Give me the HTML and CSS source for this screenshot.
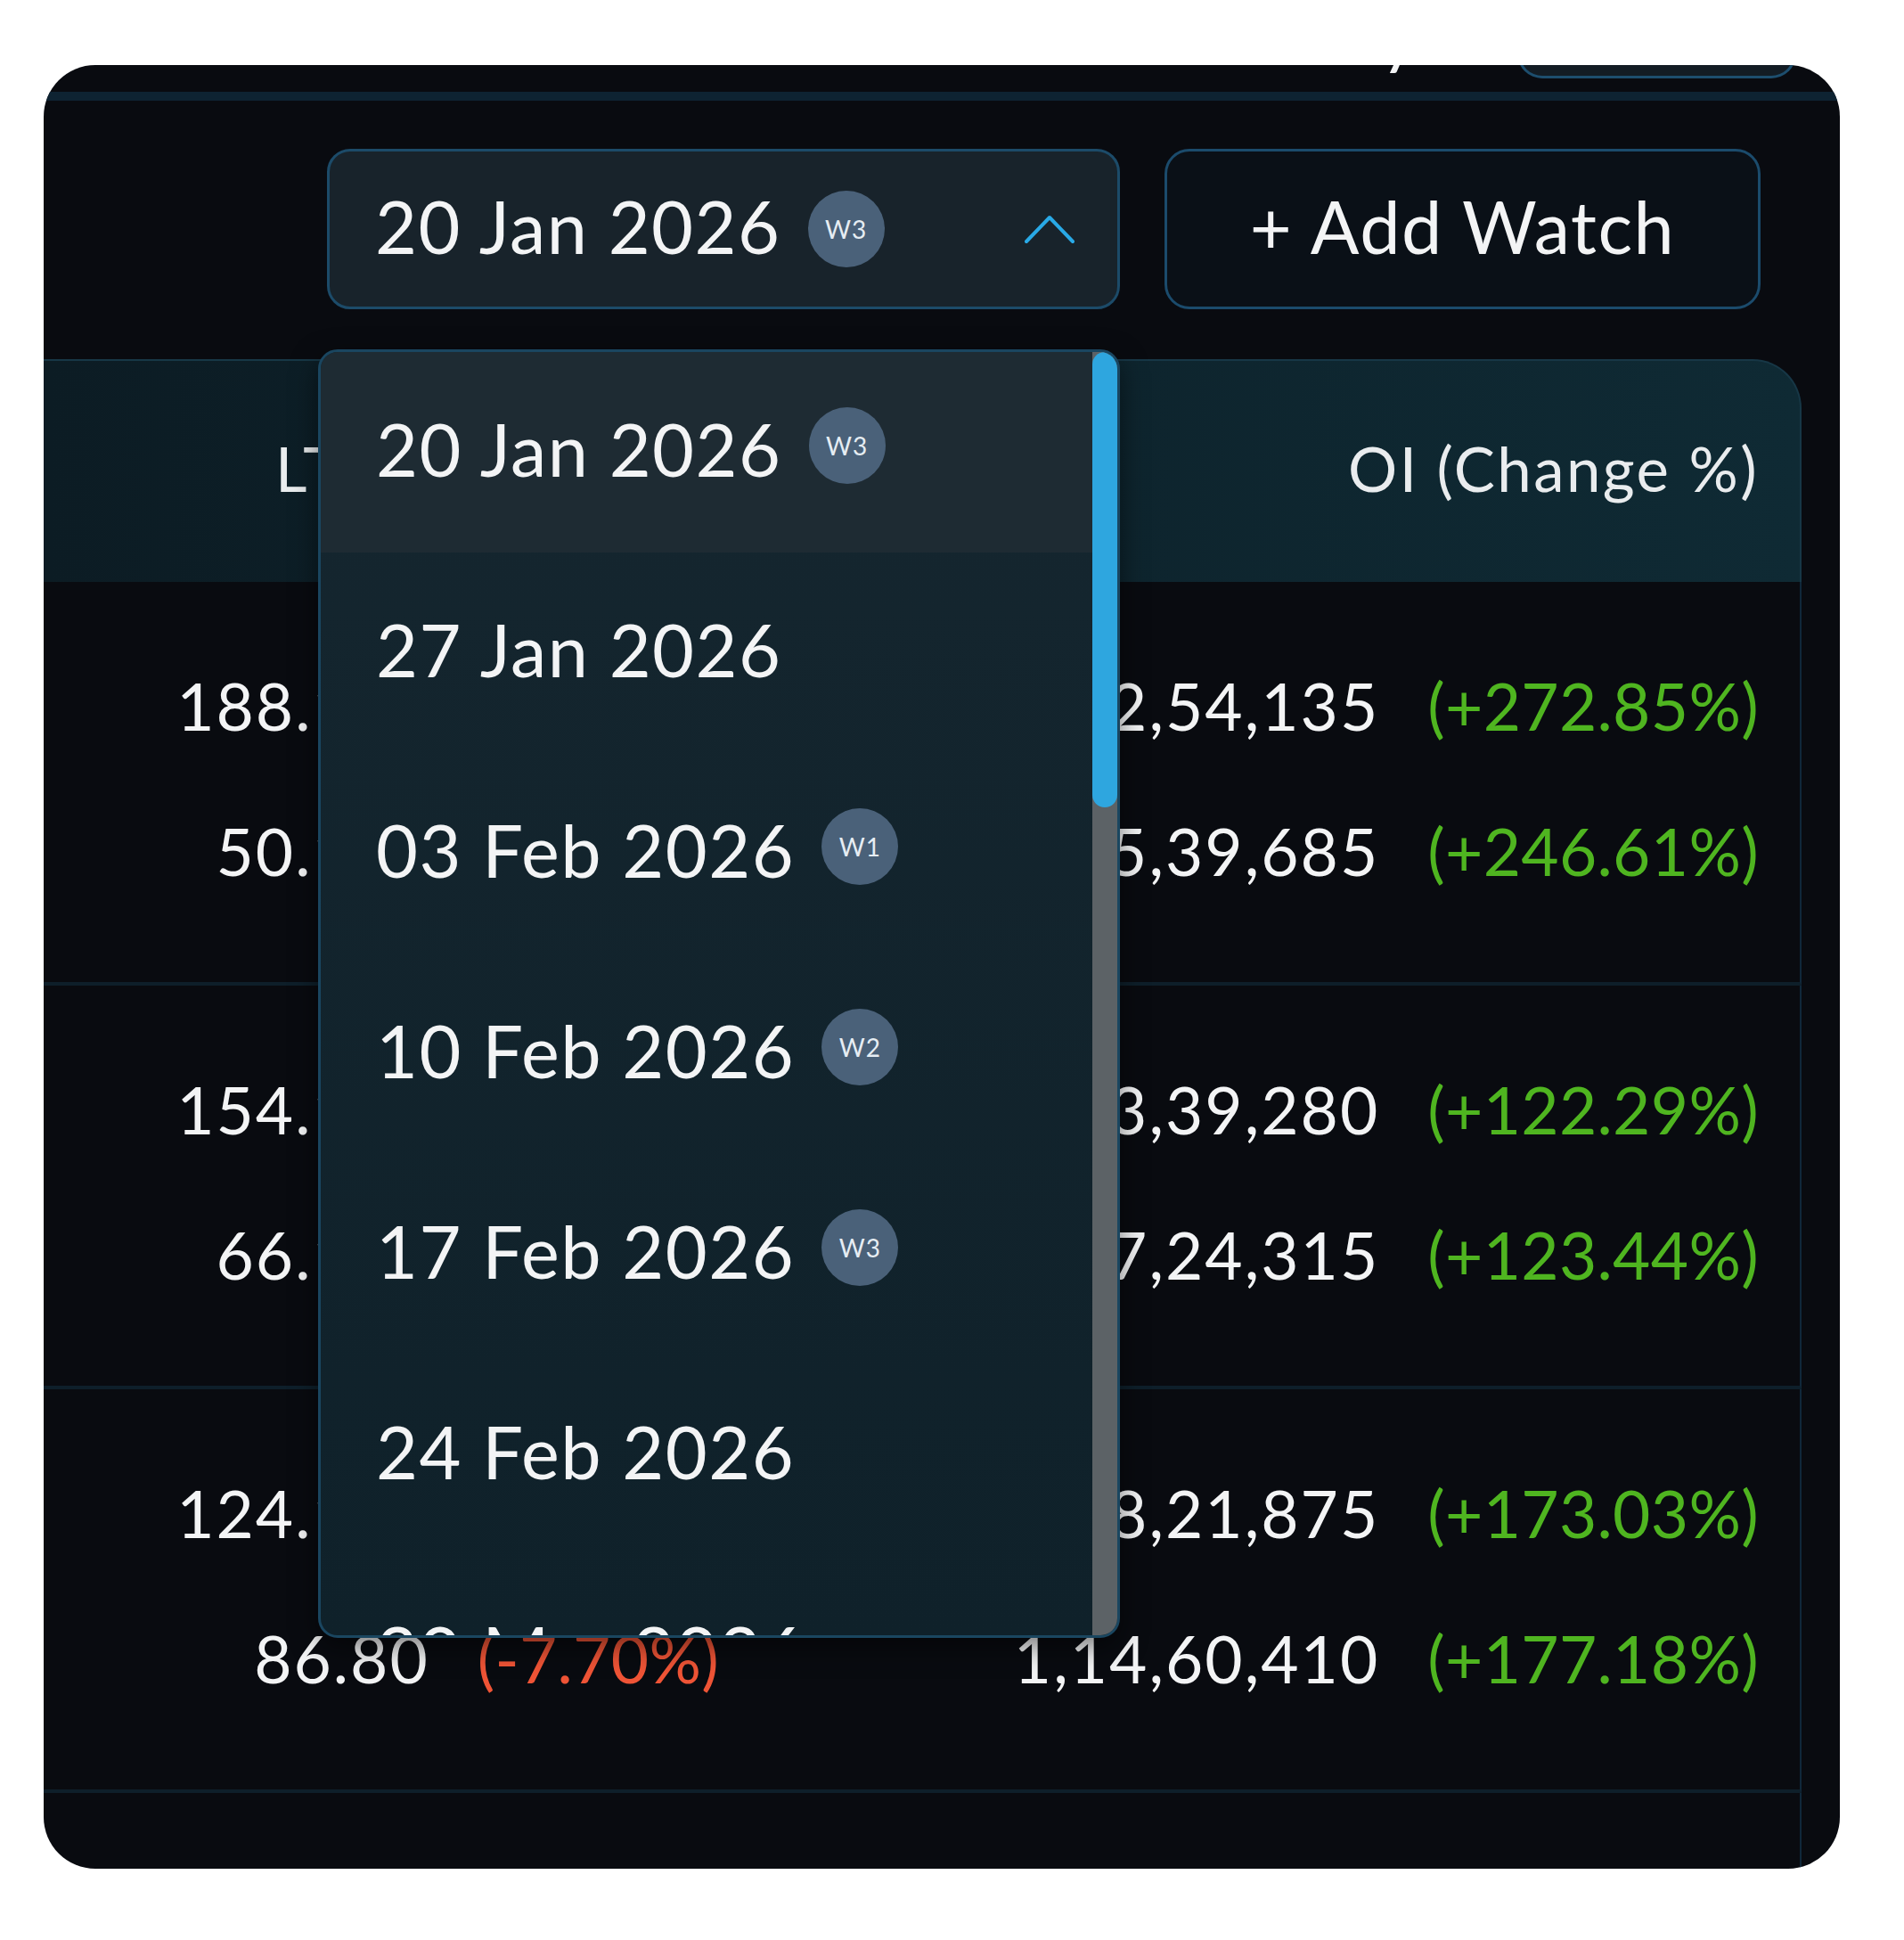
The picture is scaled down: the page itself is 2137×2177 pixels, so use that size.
FILE: index.html
```html
<!DOCTYPE html>
<html lang="en">
<head>
    <meta charset="UTF-8">
    <meta name="viewport" content="width=device-width, initial-scale=1.0">
    <title>Option Chain - Expiry</title>
    <link rel="stylesheet" href="styles.css">
</head>
<body>
    <div class="card">
        <!-- bottom of the previous bar, scrolled out of view -->
        <div class="prev-row">
            <span class="prev-label">Weekly</span>
            <div class="prev-btn"></div>
        </div>
        <div class="rule"></div>

        <div class="toolbar">
            <div class="expiry-select">
                <span class="date">20 Jan 2026</span>
                <span class="badge">W3</span>
                <svg class="chevron" viewBox="0 0 56 34"><path d="M2 31 L28 4 L54 31"/></svg>
            </div>
            <button class="add-watch">+ Add Watch</button>
        </div>

        <div class="chain">
            <div class="chain-head">
                <div class="col ltp">LTP (Change %)</div>
                <div class="col oi">OI (Change %)</div>
            </div>

            <div class="group">
                <div class="line">
                    <div class="col ltp"><span class="val">188.10</span><span class="chg down">(-12.40%)</span></div>
                    <div class="col oi"><span class="val">32,54,135</span><span class="chg up">(+272.85%)</span></div>
                </div>
                <div class="line">
                    <div class="col ltp"><span class="val">50.15</span><span class="chg down">(-14.35%)</span></div>
                    <div class="col oi"><span class="val">15,39,685</span><span class="chg up">(+246.61%)</span></div>
                </div>
            </div>
            <div class="group">
                <div class="line">
                    <div class="col ltp"><span class="val">154.10</span><span class="chg down">(-19.80%)</span></div>
                    <div class="col oi"><span class="val">23,39,280</span><span class="chg up">(+122.29%)</span></div>
                </div>
                <div class="line">
                    <div class="col ltp"><span class="val">66.15</span><span class="chg down">(-13.10%)</span></div>
                    <div class="col oi"><span class="val">17,24,315</span><span class="chg up">(+123.44%)</span></div>
                </div>
            </div>
            <div class="group">
                <div class="line">
                    <div class="col ltp"><span class="val">124.10</span><span class="chg down">(-16.75%)</span></div>
                    <div class="col oi"><span class="val">28,21,875</span><span class="chg up">(+173.03%)</span></div>
                </div>
                <div class="line">
                    <div class="col ltp"><span class="val">86.80</span><span class="chg down">(-7.70%)</span></div>
                    <div class="col oi"><span class="val">1,14,60,410</span><span class="chg up">(+177.18%)</span></div>
                </div>
            </div>
            <div class="group">
                <div class="line">
                    <div class="col ltp"><span class="val">98.40</span><span class="chg down">(-5.05%)</span></div>
                    <div class="col oi"><span class="val">9,82,340</span><span class="chg up">(+88.12%)</span></div>
                </div>
            </div>
        </div>

        <div class="expiry-menu">
            <ul class="menu-list">
                <li class="menu-item active"><span class="date">20 Jan 2026</span><span class="badge">W3</span></li>
                <li class="menu-item"><span class="date">27 Jan 2026</span></li>
                <li class="menu-item"><span class="date">03 Feb 2026</span><span class="badge">W1</span></li>
                <li class="menu-item"><span class="date">10 Feb 2026</span><span class="badge">W2</span></li>
                <li class="menu-item"><span class="date">17 Feb 2026</span><span class="badge">W3</span></li>
                <li class="menu-item"><span class="date">24 Feb 2026</span></li>
                <li class="menu-item"><span class="date">30 Mar 2026</span></li>
                <li class="menu-item"><span class="date">28 Apr 2026</span></li>
            </ul>
            <div class="scrollbar"><div class="thumb"></div></div>
        </div>
    </div>
</body>
</html>
```

FILE: styles.css
```css
body {
    margin: 0;
    background: #fff;
    font-family: Lato, "Open Sans", sans-serif;
    color: #f3f4f5;
}
.card {
    width: 2016px;
    height: 2024px;
    margin: 73px 0 0 49px;
    background: #090b10;
    border-radius: 58px;
    overflow: hidden;
    position: relative;
}

/* previous bar, only its bottom edge shows */
.prev-row {
    height: 30px;
    display: flex;
    justify-content: flex-end;
    align-items: flex-end;
    padding-right: 49px;
    overflow: hidden;
}
.prev-label {
    font-size: 80px;
    line-height: 80px;
    margin-right: 112px;
    margin-bottom: 26px;
}
.prev-btn {
    width: 313px;
    height: 60px;
    margin-bottom: 15px;
    box-sizing: border-box;
    background: #131c24;
    border: 3px solid #1d4e6e;
    border-top: 0;
    border-radius: 0 0 28px 28px;
}
.rule {
    height: 10px;
    background: #0e2332;
}

/* expiry picker + add watch */
.toolbar {
    display: flex;
    justify-content: flex-end;
    gap: 50px;
    padding: 54px 89px 0 0;
}
.expiry-select {
    width: 890px;
    height: 180px;
    box-sizing: border-box;
    display: flex;
    align-items: center;
    padding: 0 48px 0 51px;
    background: #18232b;
    border: 3px solid #1c4b69;
    border-radius: 26px;
}
.expiry-select .date {
    margin-bottom: 8px;
}
.date {
    font-size: 81px;
    letter-spacing: 1.5px;
}
.badge {
    width: 86px;
    height: 86px;
    border-radius: 50%;
    background: #4a6179;
    display: flex;
    align-items: center;
    justify-content: center;
    font-size: 28px;
    letter-spacing: 1px;
    color: #e6edf3;
    margin-left: 30px;
    flex-shrink: 0;
}
.chevron {
    width: 56px;
    height: 34px;
    margin-left: auto;
    fill: none;
    stroke: #29a9e6;
    stroke-width: 4;
    stroke-linecap: round;
    stroke-linejoin: round;
}
.add-watch {
    width: 669px;
    height: 180px;
    box-sizing: border-box;
    padding-bottom: 8px;
    background: #0a1017;
    border: 3px solid #1b4b6c;
    border-radius: 28px;
    color: #f3f4f5;
    font-family: inherit;
    font-size: 81px;
    letter-spacing: 1.5px;
    cursor: pointer;
}

/* option chain table */
.chain {
    margin: 56px 43px 0 0;
}
.chain-head,
.line {
    display: grid;
    grid-template-columns: 758px 1fr;
    align-items: center;
    padding-right: 46px;
    box-sizing: border-box;
}
.chain-head {
    height: 250px;
    padding-bottom: 8px;
    background: linear-gradient(90deg, #0c1c24, #0f2a34);
    border: 2px solid #173746;
    border-left: 0;
    border-bottom: 0;
    border-radius: 0 55px 0 0;
    font-size: 69px;
    letter-spacing: 2.4px;
    color: #e9ecee;
}
.col {
    display: flex;
    justify-content: flex-end;
}
.group {
    padding: 62px 0 61px;
    border-bottom: 4px solid #0e1f2a;
    border-right: 2px solid #10283a;
}
.line {
    height: 163px;
    padding-bottom: 9px;
    font-size: 73px;
}
.val {
    letter-spacing: 2px;
}
.chg {
    margin-left: 54px;
    letter-spacing: 0.3px;
}
.up {
    color: #4fb520;
}
.down {
    color: #ef5436;
}

/* open dropdown */
.expiry-menu {
    position: absolute;
    left: 308px;
    top: 319px;
    width: 900px;
    height: 1446px;
    box-sizing: border-box;
    display: flex;
    background: linear-gradient(180deg, #15262f, #0f212a);
    border: 3px solid #1a4660;
    border-radius: 22px;
    overflow: hidden;
    box-shadow: 0 10px 30px rgba(0, 0, 0, 0.5);
}
.menu-list {
    flex: 1;
    list-style: none;
    margin: 0;
    padding: 0;
}
.menu-item {
    height: 225px;
    display: flex;
    align-items: center;
    padding-left: 62px;
}
.menu-item .date {
    margin-bottom: 8px;
}
.menu-item.active {
    background: #1e2b33;
}
.menu-item .badge {
    margin-bottom: 16px;
}
.scrollbar {
    width: 28px;
    background: #5c6266;
}
.thumb {
    height: 511px;
    background: #2ea6df;
    border-radius: 14px;
}
```
